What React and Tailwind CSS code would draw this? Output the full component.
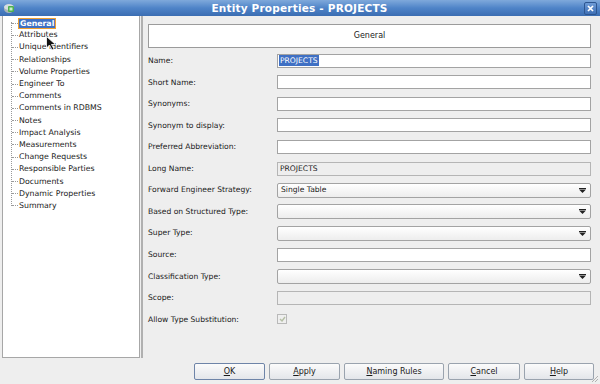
import React from "react";

const treeItems = [
  "General",
  "Attributes",
  "Unique Identifiers",
  "Relationships",
  "Volume Properties",
  "Engineer To",
  "Comments",
  "Comments in RDBMS",
  "Notes",
  "Impact Analysis",
  "Measurements",
  "Change Requests",
  "Responsible Parties",
  "Documents",
  "Dynamic Properties",
  "Summary",
];

const rows = [
  { label: "Name:", type: "text", value: "PROJECTS", selected: true },
  { label: "Short Name:", type: "text" },
  { label: "Synonyms:", type: "text" },
  { label: "Synonym to display:", type: "text" },
  { label: "Preferred Abbreviation:", type: "text" },
  { label: "Long Name:", type: "disabled", value: "PROJECTS" },
  { label: "Forward Engineer Strategy:", type: "combo", value: "Single Table" },
  { label: "Based on Structured Type:", type: "combo" },
  { label: "Super Type:", type: "combo" },
  { label: "Source:", type: "text" },
  { label: "Classification Type:", type: "combo" },
  { label: "Scope:", type: "disabled" },
  { label: "Allow Type Substitution:", type: "check" },
];

function ComboArrow() {
  return (
    <svg width="7" height="5" viewBox="0 0 7 5" className="block">
      <rect x="0" y="0" width="7" height="1" fill="#222" />
      <path d="M0 1.5 L7 1.5 L3.5 5 Z" fill="#222" />
    </svg>
  );
}

function Field({ row }) {
  if (row.type === "text") {
    return (
      <div className="h-[14px] w-full bg-white border border-[#a3a3a3] flex items-center px-[1px]">
        {row.value && (
          <span
            className={
              row.selected
                ? "bg-[#3f70c4] text-white leading-[11px] px-[1px]"
                : "leading-[11px]"
            }
          >
            {row.value}
          </span>
        )}
      </div>
    );
  }
  if (row.type === "disabled") {
    return (
      <div className="h-[14px] w-full bg-[#eeeeee] border border-[#b5b5b5] flex items-center px-[2px] text-[#222]">
        {row.value}
      </div>
    );
  }
  if (row.type === "combo") {
    return (
      <div className="h-[15px] w-full bg-gradient-to-b from-[#ffffff] to-[#ededed] border border-[#a3a3a3] rounded-[2px] flex items-center pl-[3px] pr-[4px]">
        <span className="flex-1">{row.value}</span>
        <ComboArrow />
      </div>
    );
  }
  return (
    <div className="w-[10px] h-[10px] border border-[#b9b9b9] bg-[#efefef] flex items-center justify-center">
      <svg width="7" height="6" viewBox="0 0 7 6">
        <path d="M1 3 L3 5 L6 1" stroke="#b5bfa5" strokeWidth="1.4" fill="none" />
      </svg>
    </div>
  );
}

function Button({ children, w, def }) {
  return (
    <div
      className={
        "h-[17px] rounded-[2px] flex items-center justify-center bg-gradient-to-b from-[#fbfbfb] to-[#e4e6ea] " +
        (def ? "border border-[#6e84a8]" : "border border-[#9aa3ae]")
      }
      style={{ width: w }}
    >
      {children}
    </div>
  );
}

export default function App() {
  return (
    <div
      className="w-[600px] h-[384px] bg-[#eeeeee] flex flex-col overflow-hidden relative text-[#1a1a1a]"
      style={{ fontFamily: '"DejaVu Sans", sans-serif' }}
    >
      {/* Title bar */}
      <div className="h-[16px] bg-gradient-to-b from-[#7fa9db] via-[#4f84c8] to-[#3b6db2] flex items-center px-[3px] relative shrink-0">
        <svg width="12" height="12" viewBox="0 0 12 12">
          <ellipse cx="6" cy="7" rx="5" ry="4" fill="#a9b4b8" />
          <ellipse cx="6" cy="5" rx="5" ry="3" fill="#d6dde0" />
          <rect x="5" y="4" width="6" height="6" rx="1" fill="#4caf50" />
          <rect x="6.5" y="5.5" width="3" height="3" fill="#c8f0c8" />
        </svg>
        <div className="flex-1 text-center text-white font-bold text-[10.5px] leading-[16px] tracking-[0.2px]">
          Entity Properties - PROJECTS
        </div>
        <div className="w-[13px] h-[13px] rounded-[2px] border border-[#2d5690] bg-gradient-to-b from-[#6d9bd6] to-[#3f70b6] flex items-center justify-center">
          <svg width="7" height="7" viewBox="0 0 7 7">
            <path d="M1 1 L6 6 M6 1 L1 6" stroke="white" strokeWidth="1.7" />
          </svg>
        </div>
      </div>

      {/* Body */}
      <div className="flex h-[342px] shrink-0">
        {/* Tree */}
        <div className="ml-[2px] w-[138px] h-full bg-white border border-t-0 border-[#a7a7a7] relative text-[7.8px]">
          <div className="absolute left-[8px] top-[6px] h-[184px] border-l border-dotted border-[#9a9a9a]" />
          <div className="pt-[1px] flex flex-col">
            {treeItems.map((t, i) => (
              <div key={t} className="h-[12.2px] flex items-center relative">
                <div className="w-[6px] ml-[9px] border-t border-dotted border-[#9a9a9a]" />
                {i === 0 ? (
                  <span className="ml-[0px] bg-[#3f70c4] text-white font-semibold border border-[#f0a030] px-[1px] leading-[9px]">
                    {t}
                  </span>
                ) : (
                  <span className="ml-[1px] leading-[10px]">{t}</span>
                )}
              </div>
            ))}
          </div>
          {/* mouse cursor */}
          <svg
            className="absolute left-[43px] top-[20px]"
            width="12"
            height="16"
            viewBox="0 0 12 16"
          >
            <path d="M0.5 0.5 L0.5 12 L3.5 9 L6 14 L8 13 L5.5 8.5 L9.5 8.5 Z" fill="#111" stroke="#fff" strokeWidth="0.8" />
          </svg>
        </div>

        {/* Right panel */}
        <div className="flex-1 ml-[1px] border-l-2 border-double border-[#b0b0b0] pl-[5px] pr-[9px] pt-[8px] text-[7.6px]">
          <div className="h-[24px] bg-white border border-[#9b9b9b] flex items-center justify-center text-[8px]">
            General
          </div>
          <div className="mt-[2px] flex flex-col">
            {rows.map((r) => (
              <div key={r.label} className="h-[21.55px] flex items-center">
                <div className="w-[129px] shrink-0">{r.label}</div>
                <div className="flex-1 flex items-center">
                  <Field row={r} />
                </div>
              </div>
            ))}
          </div>
        </div>
      </div>

      {/* Buttons */}
      <div className="flex-1 flex items-center justify-end gap-[4px] pr-[6px] text-[8px] pt-[1px]">
        <Button w={71} def>
          <span>
            <u>O</u>K
          </span>
        </Button>
        <Button w={71}>
          <span>
            <u>A</u>pply
          </span>
        </Button>
        <Button w={100}>
          <span>
            <u>N</u>aming Rules
          </span>
        </Button>
        <Button w={72}>
          <span>
            <u>C</u>ancel
          </span>
        </Button>
        <Button w={70}>
          <span>
            <u>H</u>elp
          </span>
        </Button>
      </div>
      {/* resize grip */}
      <svg className="absolute right-[1px] bottom-[1px]" width="8" height="8" viewBox="0 0 8 8">
        <path d="M7 1 L1 7 M7 4 L4 7" stroke="#b0b0b0" strokeWidth="1" />
      </svg>
    </div>
  );
}
